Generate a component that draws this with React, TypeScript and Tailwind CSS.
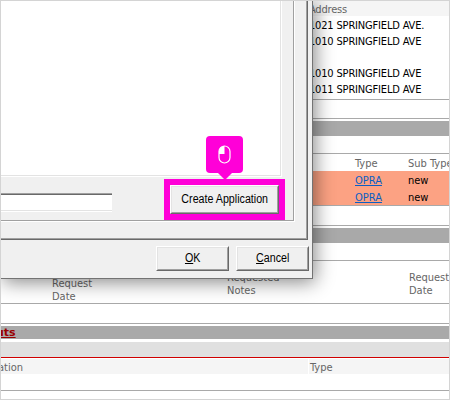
import type { ReactNode } from "react";

const addresses = ["1021 SPRINGFIELD AVE.", "1010 SPRINGFIELD AVE", "", "1010 SPRINGFIELD AVE", "1011 SPRINGFIELD AVE"];

const requests = [
  { type: "OPRA", subType: "new" },
  { type: "OPRA", subType: "new" },
];

const Rule = () => <div className="h-px shrink-0 bg-[#a9a9a9]" />;

const DialogButton = ({ className, children }: { className: string; children: ReactNode }) => (
  <button
    className={`flex shrink-0 border border-b-[#696969] border-l-white border-r-[#696969] border-t-white bg-[#f0f0f0] ${className}`}
  >
    <span className="flex h-full w-full items-center justify-center whitespace-nowrap border border-b-[#a0a0a0] border-l-[#e3e3e3] border-r-[#a0a0a0] border-t-[#e3e3e3]">
      <span className="-mt-px scale-x-[0.89]">{children}</span>
    </span>
  </button>
);

const ClickMarker = () => (
  <div className="absolute left-[205px] top-[135px] flex flex-col items-center">
    <div className="flex h-[37px] w-[37px] items-center justify-center rounded bg-[#ff00d8]">
      <svg width="13" height="19" viewBox="0 0 13 19" fill="none">
        <path d="M6.5 1C3.3 1 1 3.4 1 7v2h5.5z" fill="#fff" />
        <rect x="1" y="1" width="11" height="17" rx="5.5" stroke="#fff" strokeWidth="1.2" />
      </svg>
    </div>
    <svg width="14" height="7" viewBox="0 0 14 7">
      <path d="M0 0h14L7 7z" fill="#ff00d8" />
    </svg>
  </div>
);

const Records = () => (
  <div className="flex h-full flex-col text-[11px] leading-4 text-[#666]">
    <div className="h-[15px] bg-[#f5f5f5] pl-[308px]">
      <div className="leading-[17px] tracking-[-0.2px]">Address</div>
    </div>
    <div className="h-[83px] pl-[308px] pt-[2px] tracking-[-0.17px] text-black">
      {addresses.map((address, i) => (
        <div key={i} className="h-4 whitespace-nowrap">{address}</div>
      ))}
    </div>
    <Rule />
    <div className="h-[18px]" />
    <Rule />
    <div className="mt-[2px] h-[15px] bg-[#a9a9a9]" />
    <div className="h-[17px]" />
    <Rule />
    <div className="flex h-[17px] pl-[354px] leading-[19px]">
      <div className="w-[53px] shrink-0">Type</div>
      <div className="whitespace-nowrap">Sub Type</div>
    </div>
    <div className="h-[34px] bg-[#fca283] text-black">
      {requests.map((request, i) => (
        <div key={i} className="flex h-[17px] pl-[354px] leading-[19px]">
          <div className="w-[53px] shrink-0">
            <a className="text-[#0a5fc4] underline">{request.type}</a>
          </div>
          <div>{request.subType}</div>
        </div>
      ))}
    </div>
    <Rule />
    <div className="h-[19px]" />
    <Rule />
    <div className="mt-[2px] h-[15px] bg-[#a9a9a9]" />
    <div className="h-[17px]" />
    <Rule />
    <div className="flex h-[42px] pl-[51px] leading-[13px]">
      <div className="w-[175px] shrink-0 pt-[16px]">Request<br />Date</div>
      <div className="w-[182px] shrink-0 pt-[10px]">Requested<br />Notes</div>
      <div className="pt-[10px]">Request<br />Date</div>
    </div>
    <Rule />
    <div className="h-[19px]" />
    <Rule />
    <div className="mt-[2px] h-[13px] bg-[#a9a9a9] font-['DejaVu_Sans',sans-serif] text-[11px] font-bold leading-[14px] text-[#990000]">
      <span className="-ml-[5px] underline">uts</span>
    </div>
    <div className="mt-[3px] h-4 border-b border-[#d00000] bg-[#e0e0e0]" />
    <div className="mt-px flex h-[15px] gap-px leading-[17px]">
      <div className="w-[307px] shrink-0 bg-[#f5f5f5]">
        <span className="-ml-[3px]">ation</span>
      </div>
      <div className="flex-1 bg-[#f5f5f5] pl-px">Type</div>
    </div>
    <div className="h-4" />
    <Rule />
  </div>
);

const ApplicationDialog = () => (
  <div className="absolute left-0 top-0 h-[278px] w-[312px] border-b border-r border-[#737373] bg-[#f0f0f0] shadow-[2px_3px_18px_rgba(0,0,0,0.48)]">
    <div className="h-[239px] w-[307px] border-b border-r border-[#696969]">
      <div className="h-full w-full border-b border-r border-[#a0a0a0]">
        <div className="h-[221px] w-[294px] border-b border-r border-white">
          <div className="h-full w-full border-b border-r border-[#a0a0a0]">
            <div className="h-[176px] w-[281px] border-b border-r border-white">
              <div className="h-full w-full border-b border-r border-[#e3e3e3] bg-white" />
            </div>
            <div className="flex">
              <div className="mt-4 h-[19px] w-[111px] border-b border-t border-b-white border-t-[#a0a0a0]">
                <div className="h-full border-b border-t border-b-[#e3e3e3] border-t-[#696969] bg-white" />
              </div>
              <div className="ml-[52px] mt-[2px] flex h-[41px] w-[121px] items-start bg-[#ff00d8] pl-[6px] pt-[6px]">
                <DialogButton className="h-[29px] w-[109px]">Create Application</DialogButton>
              </div>
            </div>
          </div>
        </div>
      </div>
    </div>
    <div className="flex gap-[7px] pl-[155px] pt-[6px]">
      <DialogButton className="h-[25px] w-[73px]">
        <u>O</u>K
      </DialogButton>
      <DialogButton className="h-[25px] w-[73px]">
        <u>C</u>ancel
      </DialogButton>
    </div>
  </div>
);

export default function App() {
  return (
    <div className="relative h-[400px] w-[450px] overflow-hidden border border-[#d4d4d4] bg-white font-['DejaVu_Sans_Condensed','DejaVu_Sans',sans-serif]">
      <Records />
      <div className="absolute inset-0 overflow-hidden font-['Liberation_Sans',Arial,sans-serif] text-[12px] text-black">
        <ApplicationDialog />
        <ClickMarker />
      </div>
    </div>
  );
}
